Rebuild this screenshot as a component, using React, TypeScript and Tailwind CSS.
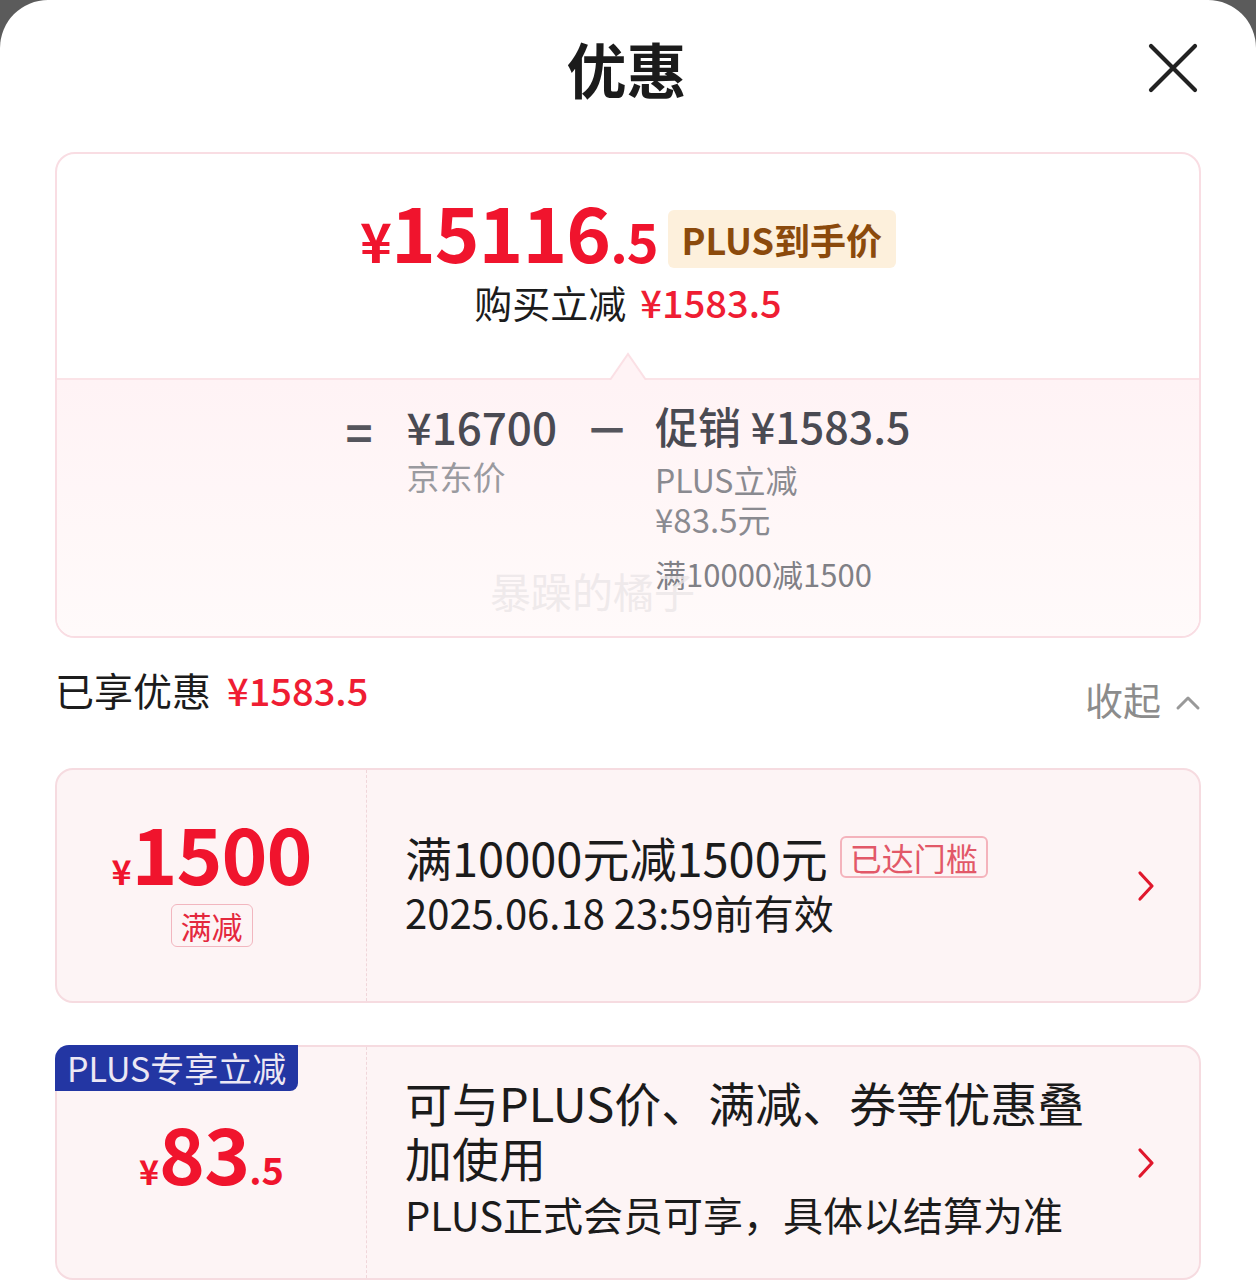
const font = { fontFamily: '"Noto Sans CJK SC", "Noto Sans", sans-serif' };

const Chevron = () => (
  <svg width="22" height="34" viewBox="0 0 22 34" fill="none">
    <path d="M5 4 L17 17 L5 30" stroke="#e0172c" strokeWidth="3.2" strokeLinecap="round" strokeLinejoin="round" />
  </svg>
);

const CouponCard = ({
  left,
  children,
  badge,
}: {
  left: React.ReactNode;
  children: React.ReactNode;
  badge?: string;
}) => (
  <div className="relative flex h-[235px] rounded-[18px] border-2 border-[#f6dbe0] bg-[#fdf4f5]">
    {badge && (
      <div className="absolute -left-[2px] -top-[2px] flex h-[46px] items-center rounded-tl-[14px] rounded-br-[8px] bg-[#2336a3] px-[12px] text-[34px] leading-none text-[#ece8f4]">
        {badge}
      </div>
    )}
    <div className="flex w-[310px] shrink-0 flex-col items-center justify-center border-r border-dashed border-[#f0d6da]">
      {left}
    </div>
    <div className="flex flex-1 items-center pl-[38px] pr-[42px]">
      <div className="flex-1">{children}</div>
      <Chevron />
    </div>
  </div>
);

const App = () => {
  return (
    <div style={font} className="min-h-screen bg-[#5b5b5b]">
      <div className="min-h-[1281px] rounded-t-[48px] bg-white px-[55px]">
        {/* header */}
        <div className="flex h-[136px] items-center justify-between">
          <div className="w-[50px]" />
          <h1 className="text-[60px] font-bold leading-none text-[#1b1b1b]">优惠</h1>
          <button className="mr-[3px] flex h-[50px] w-[50px] items-center justify-center">
            <svg width="50" height="50" viewBox="0 0 50 50" fill="none">
              <path d="M3 3 L47 47 M47 3 L3 47" stroke="#222" strokeWidth="4.2" strokeLinecap="round" />
            </svg>
          </button>
        </div>

        {/* summary card */}
        <div className="mt-[16px] overflow-hidden rounded-[20px] border-2 border-[#f9dde3]">
          <div className="flex h-[224px] flex-col items-center pt-[38px]">
            <div className="flex items-center leading-none">
              <div className="flex items-baseline font-bold text-[#f0142d] tracking-[-1px]">
                <span className="text-[54px] leading-none">¥</span>
                <span className="text-[76px] leading-none">15116</span>
                <span className="text-[54px] leading-none">.5</span>
              </div>
              <span className="ml-[10px] mt-[18px] flex h-[58px] items-center rounded-[6px] bg-[#fdf0dc] px-[14px] text-[36px] font-bold leading-none text-[#8b4a0c]">
                PLUS到手价
              </span>
            </div>
            <div className="mt-[15px] flex items-baseline text-[38px] leading-none">
              <span className="text-[#1c1c1c]">购买立减</span>
              <span className="ml-[14px] font-medium text-[#ef1d33]">¥1583.5</span>
            </div>
          </div>
          <div className="relative h-[258px] border-t-2 border-[#fbe3e7] bg-gradient-to-b from-[#fff3f5] to-[#fffafa]">
            <svg
              className="absolute -top-[28px] left-1/2 -translate-x-1/2"
              width="40"
              height="28"
              viewBox="0 0 40 28"
            >
              <path d="M2 28 L20 2 L38 28" fill="#fff3f5" stroke="#fbe0e5" strokeWidth="2" />
            </svg>
            <div className="flex justify-center pt-[24px]">
              <span className="mt-[4px] text-[46px] font-bold leading-none text-[#55555c]">=</span>
              <div className="ml-[34px] flex flex-col">
                <span className="text-[44px] font-medium leading-none text-[#4a4a52]">¥16700</span>
                <span className="mt-[12px] text-[33px] leading-none text-[#9a9a9f]">京东价</span>
              </div>
              <span className="ml-[28px] mt-[2px] text-[44px] font-bold leading-none text-[#55555c]">－</span>
              <div className="ml-[26px] flex flex-col">
                <span className="text-[43px] font-medium leading-none text-[#4a4a52]">促销 ¥1583.5</span>
                <span className="mt-[16px] text-[32px] leading-none text-[#8a8a90]">PLUS立减</span>
                <span className="mt-[8px] text-[33px] leading-none text-[#8a8a90]">¥83.5元</span>
                <span className="mt-[22px] text-[31px] leading-none text-[#808086]">满10000减1500</span>
              </div>
            </div>
            <span className="absolute left-[433px] top-[190px] text-[41px] leading-none text-[#ebe6e8]/80">
              暴躁的橘子
            </span>
          </div>
        </div>

        {/* enjoyed */}
        <div className="flex h-[130px] items-start justify-between pt-[32px]">
          <div className="flex items-baseline text-[39px] leading-none">
            <span className="text-[#1c1c1c]">已享优惠</span>
            <span className="ml-[16px] text-[38px] font-medium text-[#ef1d33]">¥1583.5</span>
          </div>
          <div className="mt-[10px] flex items-center text-[38px] leading-none text-[#8c8c8c]">
            <span>收起</span>
            <svg className="ml-[14px] mt-[8px]" width="26" height="16" viewBox="0 0 26 16" fill="none">
              <path d="M3 13 L13 3 L23 13" stroke="#999" strokeWidth="3" strokeLinecap="round" strokeLinejoin="round" />
            </svg>
          </div>
        </div>

        {/* coupons */}
        <div className="flex flex-col gap-[42px]">
          <CouponCard
            left={
              <div className="-mt-[12px] flex flex-col items-center">
                <div className="flex items-baseline font-bold leading-none text-[#f0142d]">
                  <span className="text-[34px]">¥</span>
                  <span className="text-[78px] tracking-[-1px]">1500</span>
                </div>
                <span className="mt-[14px] rounded-[6px] border border-[#f2b6bf] px-[9px] py-[5px] text-[31px] leading-none text-[#e4283d]">
                  满减
                </span>
              </div>
            }
          >
            <div className="-mt-[6px] flex items-center">
              <span className="text-[47px] leading-none text-[#1b1b1b]">满10000元减1500元</span>
              <span className="ml-[12px] rounded-[6px] border-2 border-[#f4b3bc] px-[8px] py-[3px] text-[32px] leading-none text-[#e25868]">
                已达门槛
              </span>
            </div>
            <div className="mt-[12px] text-[40px] leading-none text-[#1b1b1b]">2025.06.18 23:59前有效</div>
          </CouponCard>

          <CouponCard
            badge="PLUS专享立减"
            left={
              <div className="-mt-[24px] flex items-baseline font-bold leading-none text-[#f0142d]">
                <span className="text-[34px]">¥</span>
                <span className="text-[78px] tracking-[-1px]">83</span>
                <span className="text-[38px]">.5</span>
              </div>
            }
          >
            <div className="-mt-[17px]">
              <div className="w-[700px] text-[47px] leading-[55px] text-[#1b1b1b]">
                可与PLUS价、满减、券等优惠叠加使用
              </div>
              <div className="mt-[10px] text-[40px] leading-none text-[#1b1b1b]">PLUS正式会员可享，具体以结算为准</div>
            </div>
          </CouponCard>
        </div>
      </div>
    </div>
  );
};

export default App;
